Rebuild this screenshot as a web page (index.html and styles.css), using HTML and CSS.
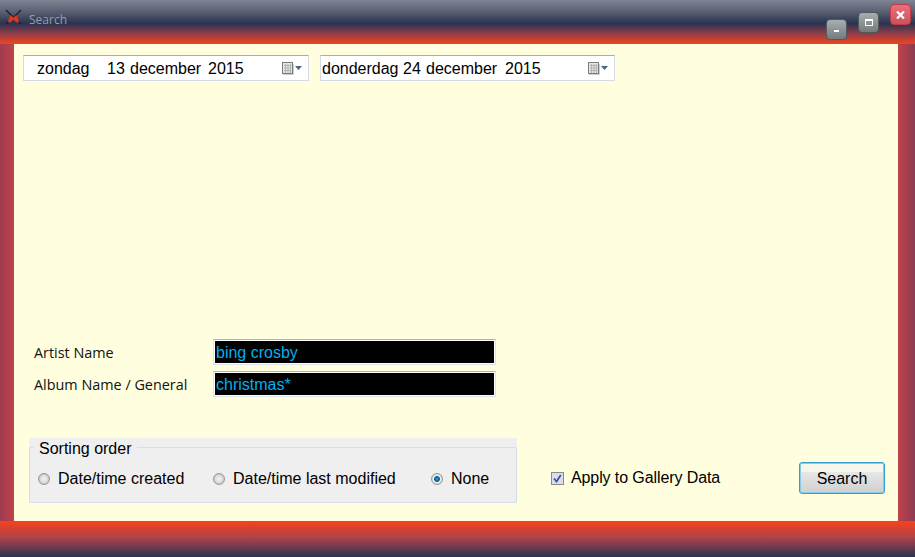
FILE: index.html
```html
<!DOCTYPE html>
<html lang="nl">
<head>
<meta charset="utf-8">
<title>Search</title>
<link rel="stylesheet" href="styles.css">
</head>
<body>
<div class="window">
  <header class="titlebar">
    <svg class="app-icon" width="17" height="16" viewBox="0 0 17 16">
      <path d="M1 1 L8.5 8.5 L16 1 M1.5 14.5 L8.5 8.5 L15.5 14.5" fill="none" stroke="#1c1c22" stroke-width="1.3"/>
      <path d="M5.5 6 L8.5 8.5 L11.5 6 L14 12.5 L12.5 14 L8.5 10.5 L4.5 14 L3 12.5 Z" fill="#ea3418"/>
    </svg>
    <span class="title">Search</span>
    <div class="winbtn min"><span class="glyph-min"></span></div>
    <div class="winbtn max"><span class="glyph-max"></span></div>
    <div class="winbtn close">
      <svg width="9" height="8" viewBox="0 0 9 8"><path d="M1 0.5 L8 7.5 M8 0.5 L1 7.5" stroke="#fff" stroke-width="2.2"/></svg>
    </div>
  </header>
  <div class="middle">
    <div class="side side-left"></div>
    <main class="content">
      <div class="dates">
        <div class="datepicker dp-one">
          <span class="dp-text one"><span>zondag</span><span>13</span><span>december</span><span>2015</span></span>
          <svg class="cal" width="22" height="14" viewBox="0 0 22 14">
            <rect x="1.5" y="1.5" width="10" height="11" fill="#e6e6e6" stroke="#7c7c7c"/>
            <path d="M3 4.5H10.5M3 7H10.5M3 9.5H10.5M4.5 3V12M7 3V12M9.5 3V12" stroke="#b4b4b4"/>
            <path d="M2 13.5H12.5V3" fill="none" stroke="#cfcfcf"/>
            <path d="M14 5H21L17.5 9Z" fill="#4d6385"/>
          </svg>
        </div>
        <div class="datepicker dp-two">
          <span class="dp-text two"><span>donderdag</span><span>24</span><span>december</span><span>2015</span></span>
          <svg class="cal" width="22" height="14" viewBox="0 0 22 14">
            <rect x="1.5" y="1.5" width="10" height="11" fill="#e6e6e6" stroke="#7c7c7c"/>
            <path d="M3 4.5H10.5M3 7H10.5M3 9.5H10.5M4.5 3V12M7 3V12M9.5 3V12" stroke="#b4b4b4"/>
            <path d="M2 13.5H12.5V3" fill="none" stroke="#cfcfcf"/>
            <path d="M14 5H21L17.5 9Z" fill="#4d6385"/>
          </svg>
        </div>
      </div>
      <div class="fields">
        <div class="field">
          <label class="field-label">Artist Name</label>
          <div class="field-input">bing crosby</div>
        </div>
        <div class="field">
          <label class="field-label">Album Name / General</label>
          <div class="field-input">christmas*</div>
        </div>
      </div>
      <div class="bottom-row">
        <fieldset class="sort">
          <legend class="sort-legend">Sorting order</legend>
          <div class="radio r1"><span class="radio-dot"></span>Date/time created</div>
          <div class="radio r2"><span class="radio-dot"></span>Date/time last modified</div>
          <div class="radio"><span class="radio-dot checked"></span>None</div>
        </fieldset>
        <div class="apply">
          <svg class="check" width="13" height="13" viewBox="0 0 13 13">
            <rect x="0.5" y="0.5" width="12" height="12" fill="#d9ddee" stroke="#8a8a8a"/>
            <path d="M3 6.5 L5.5 9.5 L9.8 3" fill="none" stroke="#3d4f96" stroke-width="1.7"/>
          </svg>
          <span class="apply-text">Apply to Gallery Data</span>
        </div>
        <button class="search-btn" type="button">Search</button>
      </div>
    </main>
    <div class="side side-right"></div>
  </div>
  <footer class="bottombar"></footer>
</div>
</body>
</html>
```
FILE: styles.css
```css
* { box-sizing: border-box; }
html, body { margin: 0; padding: 0; }
body {
  width: 915px;
  height: 557px;
  overflow: hidden;
  font-family: "Liberation Sans", Arial, sans-serif;
  color: #000;
}
.window {
  width: 915px;
  height: 557px;
  display: flex;
  flex-direction: column;
}
.titlebar {
  position: relative;
  height: 44px;
  flex: none;
  background: linear-gradient(to bottom, #7f8594 0%, #575e70 28%, #2a3350 53%, #8a3d4a 75%, #f4431e 100%);
  display: flex;
  align-items: flex-start;
  padding: 9px 0 0 5px;
}
.app-icon { flex: none; }
.title {
  margin: 3px 0 0 7px;
  font: 12px/16px "Open Sans", "Noto Sans", sans-serif;
  color: #9a9da6;
}
.winbtn {
  position: absolute;
  width: 21px;
  height: 21px;
  border-radius: 4px;
  border: 1px solid #4f5a60;
  background: linear-gradient(to bottom, #a8adad, #757b7e);
  display: flex;
  align-items: center;
  justify-content: center;
}
.min { left: 826px; top: 19px; }
.max { left: 858px; top: 12px; }
.close {
  left: 890px;
  top: 4px;
  border-color: #c23a46;
  background: linear-gradient(to bottom, #e8707a, #c9535c);
}
.glyph-min { width: 5px; height: 2px; background: #fff; margin-top: 3px; }
.glyph-max { width: 8px; height: 7px; border: 1px solid #fff; border-top-width: 2px; }
.middle { flex: 1; display: flex; min-height: 0; }
.side { flex: none; }
.side-left { width: 14px; background: linear-gradient(to right, #9e3c52, #c04349); }
.side-right { width: 17px; background: linear-gradient(to right, #c04349, #8d3a52); }
.content {
  flex: 1;
  background: #ffffdf;
  display: flex;
  flex-direction: column;
  padding: 11px 13px 18px 9px;
}
.dates { display: flex; gap: 11px; }
.datepicker {
  height: 26px;
  background: #fff;
  border: 1px solid #d4dbe6;
  border-top-color: #adadad;
  display: flex;
  align-items: center;
  font-size: 16px;
}
.dp-one { width: 286px; }
.dp-two { width: 295px; }
.dp-text {
  display: grid;
  flex: 1;
  white-space: nowrap;
  padding-top: 2px;
}
.one { padding-left: 13px; grid-template-columns: 70px 23px 78px auto; }
.two { padding-left: 1px; grid-template-columns: 81px 23px 79px auto; }
.cal { flex: none; margin: 0 5px 0 0; }
.fields {
  margin-top: 258px;
  display: flex;
  flex-direction: column;
  gap: 6px;
}
.field { display: flex; align-items: center; }
.field-label {
  width: 190px;
  padding: 2px 0 0 11px;
  font: 14.4px/20px "Open Sans", "Noto Sans", sans-serif;
  color: #111;
}
.field-input {
  width: 283px;
  height: 26px;
  background: #000;
  border: 1px solid #dde2ea;
  border-top-color: #b5b5b5;
  box-shadow: inset 0 0 0 1px #fff;
  color: #00b0f0;
  font-size: 16px;
  line-height: 25px;
  padding-left: 2px;
}
.bottom-row {
  margin-top: 41px;
  display: flex;
  align-items: flex-start;
}
.sort {
  margin: 0 0 0 6px;
  width: 488px;
  height: 65px;
  padding: 0 0 0 9px;
  border: 0;
  display: flex;
  align-items: center;
  background: #efefef;
  position: relative;
}
.sort::before {
  content: "";
  position: absolute;
  left: 0;
  right: 0;
  top: 9px;
  bottom: 0;
  border: 1px solid #d5deea;
  border-radius: 2px;
}
.sort-legend {
  position: absolute;
  top: 0;
  left: 5px;
  padding: 0 5px;
  background: #efefef;
  font-size: 16px;
  line-height: 22px;
}
.radio {
  display: flex;
  align-items: center;
  font-size: 16px;
  line-height: 20px;
  margin-top: 17px;
}
.r1 { width: 175px; }
.r2 { width: 218px; }
.radio-dot {
  width: 12px;
  height: 12px;
  border-radius: 50%;
  border: 1px solid #9a9a9a;
  background: radial-gradient(circle at 50% 50%, #f4f4f4 0, #dcdcdc 3.5px, #b4b4b4 6px);
  margin-right: 8px;
  flex: none;
}
.checked {
  background: radial-gradient(circle at 50% 50%, #2aa0d8 0, #0a5e8e 2.6px, #f6f6f6 3.3px, #c8c8c8 5.5px);
}
.apply {
  margin: 30px 0 0 34px;
  display: flex;
  align-items: center;
  width: 248px;
  font-size: 16px;
  line-height: 20px;
  gap: 7px;
}
.apply-text { letter-spacing: -0.1px; }
.check { flex: none; }
.search-btn {
  margin: 24px 0 0 0;
  width: 86px;
  height: 32px;
  border: 1px solid #2fa0d0;
  border-radius: 3px;
  box-shadow: inset 0 0 0 1px #8ccbe6;
  background: linear-gradient(to bottom, #f6f6ea 0, #f6f6ea 28%, #e6e6e6 32%, #d0d0d0 100%);
  font: 16px "Liberation Sans", Arial, sans-serif;
  color: #000;
  padding: 1px 0 0;
}
.bottombar {
  height: 36px;
  flex: none;
  background: linear-gradient(to bottom, #f8431a 0%, #b0424c 45%, #2a3350 100%);
}
```
